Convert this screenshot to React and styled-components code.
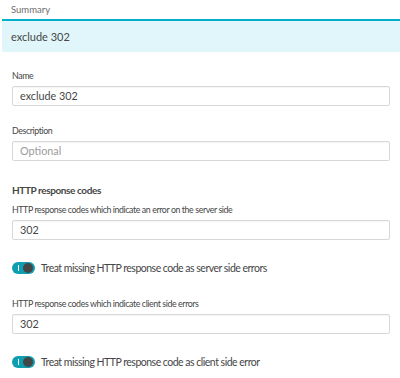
import React from 'react';
import styled, { createGlobalStyle } from 'styled-components';

const GlobalStyle = createGlobalStyle`
  body {
    margin: 0;
    background: #fff;
    font-family: Lato, "Open Sans", sans-serif;
    color: #454646;
  }
`;

const Page = styled.div`
  width: 400px;
  height: 378px;
  overflow: hidden;
`;

const SummaryLabel = styled.div`
  height: 19px;
  padding-left: 11px;
  font-size: 9.5px;
  line-height: 19px;
  color: #6d6d6d;
`;

const SummaryBand = styled.div`
  margin-left: 2px;
  height: 31px;
  border-top: 2px solid #00b0c8;
  background: #e1f6fa;
  padding-left: 9px;
  font-size: 11px;
  line-height: 31px;
  color: #454646;
`;

const Form = styled.div`
  padding: 17px 10px 0 12px;
  display: flex;
  flex-direction: column;
`;

const Field = styled.div`
  display: flex;
  flex-direction: column;
  margin-bottom: ${(p) => p.gap || 0}px;
`;

const Label = styled.label`
  font-size: 8.8px;
  letter-spacing: -0.4px;
  line-height: 14px;
  color: #454646;
  margin-bottom: 3px;
`;

const Input = styled.div`
  height: 18px;
  border: 1px solid #d8d8d8;
  border-radius: 2px;
  box-shadow: inset 0 1px 1px rgba(0, 0, 0, 0.04);
  padding-left: 7px;
  font-size: 10.8px;
  line-height: 18px;
  color: ${(p) => (p.placeholder ? '#9a9a9a' : '#454646')};
`;

const Heading = styled.h3`
  margin: 0 0 5px;
  font-size: 10px;
  letter-spacing: -0.4px;
  font-weight: 700;
  line-height: 16px;
  color: #454646;
`;

const ToggleRow = styled.div`
  display: flex;
  align-items: center;
  gap: 6px;
  height: 12px;
  margin-bottom: ${(p) => p.gap || 0}px;
`;

const Track = styled.span`
  position: relative;
  width: 23px;
  height: 12px;
  border-radius: 6px;
  background: #0f9eb0;
  flex-shrink: 0;
`;

const Knob = styled.span`
  position: absolute;
  right: 2px;
  top: 1px;
  width: 10px;
  height: 10px;
  border-radius: 50%;
  background: #454646;
`;

const Tick = styled.span`
  position: absolute;
  left: 6px;
  top: 3px;
  width: 1px;
  height: 6px;
  background: #fff;
`;

const ToggleText = styled.span`
  font-size: 10.5px;
  letter-spacing: -0.5px;
  line-height: 12px;
  color: #454646;
`;

function Toggle({ children, gap }) {
  return (
    <ToggleRow gap={gap}>
      <Track>
        <Tick />
        <Knob />
      </Track>
      <ToggleText>{children}</ToggleText>
    </ToggleRow>
  );
}

export default function App() {
  return (
    <Page>
      <GlobalStyle />
      <SummaryLabel>Summary</SummaryLabel>
      <SummaryBand>exclude 302</SummaryBand>
      <Form>
        <Field gap={18}>
          <Label>Name</Label>
          <Input>exclude 302</Input>
        </Field>
        <Field gap={21}>
          <Label>Description</Label>
          <Input placeholder="true">Optional</Input>
        </Field>
        <Heading>HTTP response codes</Heading>
        <Field gap={22}>
          <Label>HTTP response codes which indicate an error on the server side</Label>
          <Input>302</Input>
        </Field>
        <Toggle gap={23}>Treat missing HTTP response code as server side errors</Toggle>
        <Field gap={22}>
          <Label>HTTP response codes which indicate client side errors</Label>
          <Input>302</Input>
        </Field>
        <Toggle>Treat missing HTTP response code as client side error</Toggle>
      </Form>
    </Page>
  );
}
